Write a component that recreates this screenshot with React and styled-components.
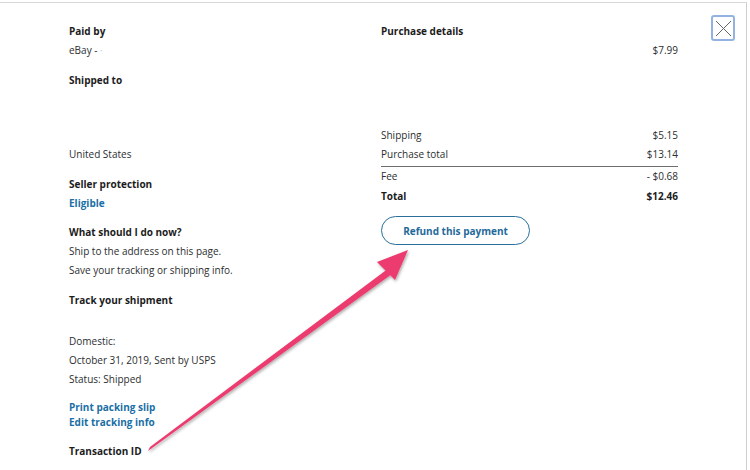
import React from "react"
import styled, { createGlobalStyle } from "styled-components"

const GlobalStyle = createGlobalStyle`
  html, body {
    margin: 0;
    padding: 0;
    background: #fff;
  }
  body {
    font-family: "Open Sans", "Noto Sans", sans-serif;
    color: #2c2e2f;
    -webkit-font-smoothing: antialiased;
  }
`

const Page = styled.div`
  position: relative;
  width: 750px;
  height: 470px;
  overflow: hidden;
  background: #fff;
`

const Modal = styled.div`
  margin-top: 2px;
  width: 747px;
  height: 468px;
  box-sizing: border-box;
  border-top: 1px solid #d6d6d6;
  border-right: 1px solid #cfcfcf;
  padding: 19px 0 0 69px;
  display: grid;
  grid-template-columns: 312px 297px;
`

const Column = styled.div`
  display: flex;
  flex-direction: column;
`

const Section = styled.div`
  display: flex;
  flex-direction: column;
  margin-bottom: ${p => p.$gap || 11}px;
`

const Label = styled.div`
  font-size: 10px;
  line-height: 19px;
  font-weight: 700;
  color: #1c1c1c;
`

const Line = styled.div`
  font-size: 10px;
  line-height: 19px;
  color: #2c2e2f;
`

const Spacer = styled.div`
  height: ${p => p.$h}px;
`

const Link = styled.a`
  font-size: 10px;
  line-height: ${p => p.$lh || 19}px;
  font-weight: 700;
  color: #1a6fa5;
  text-decoration: none;
`

const Row = styled.div`
  display: flex;
  justify-content: space-between;
  font-size: 10px;
  line-height: ${p => p.$lh || 19}px;
  font-weight: ${p => (p.$bold ? 700 : 400)};
  color: ${p => (p.$bold ? "#1c1c1c" : "#2c2e2f")};
  ${p => p.$rule && "border-bottom: 1px solid #6e6e6e; padding-bottom: 2px;"}
`

const Amount = styled.div`
  text-align: right;
  font-size: 10px;
  line-height: 19px;
  color: #2c2e2f;
`

const RefundButton = styled.button`
  margin-top: 10px;
  width: 149px;
  height: 29px;
  border: 1px solid #2a6f9b;
  border-radius: 15px;
  background: #fff;
  color: #1f6a9a;
  font-family: inherit;
  font-size: 10px;
  font-weight: 700;
  cursor: pointer;
  padding: 0;
`

const CloseButton = styled.button`
  position: absolute;
  top: 15px;
  left: 711px;
  width: 24px;
  height: 26px;
  padding: 0;
  border: 2px solid #93b2e2;
  border-radius: 3px;
  background: #fff;
  display: flex;
  align-items: center;
  justify-content: center;
`

const Arrow = styled.svg`
  position: absolute;
  left: 0;
  top: 0;
  pointer-events: none;
`

export default function App() {
  return (
    <>
      <GlobalStyle />
      <Page>
        <Modal>
          <Column>
            <Section>
              <Label>Paid by</Label>
              <Line>eBay - <span style={{ color: "#ccc" }}>·</span></Line>
            </Section>
            <Section>
              <Label>Shipped to</Label>
              <Spacer $h={55} />
              <Line>United States</Line>
            </Section>
            <Section>
              <Label>Seller protection</Label>
              <Link $lh={18}>Eligible</Link>
            </Section>
            <Section>
              <Label>What should I do now?</Label>
              <Line>Ship to the address on this page.</Line>
              <Line>Save your tracking or shipping info.</Line>
            </Section>
            <Section $gap={22}>
              <Label>Track your shipment</Label>
            </Section>
            <Section>
              <Line>Domestic:</Line>
              <Line>October 31, 2019, Sent by USPS</Line>
              <Line>Status: Shipped</Line>
            </Section>
            <Section $gap={12}>
              <Link $lh={15}>Print packing slip</Link>
              <Link $lh={15}>Edit tracking info</Link>
            </Section>
            <Label>Transaction ID</Label>
          </Column>
          <Column>
            <Label>Purchase details</Label>
            <Amount>$7.99</Amount>
            <Spacer $h={66} />
            <Row>
              <span>Shipping</span>
              <span>$5.15</span>
            </Row>
            <Row $rule>
              <span>Purchase total</span>
              <span>$13.14</span>
            </Row>
            <Row>
              <span>Fee</span>
              <span>- $0.68</span>
            </Row>
            <Row $bold $lh={20}>
              <span>Total</span>
              <span>$12.46</span>
            </Row>
            <div>
              <RefundButton>Refund this payment</RefundButton>
            </div>
          </Column>
        </Modal>
        <CloseButton aria-label="Close">
          <svg width="17" height="17" viewBox="0 0 17 17">
            <path d="M1 1 L16 16 M16 1 L1 16" stroke="#666" strokeWidth="1" fill="none" />
          </svg>
        </CloseButton>
        <Arrow width="750" height="470" viewBox="0 0 750 470">
          <defs>
            <filter id="sh" x="-10%" y="-10%" width="120%" height="120%">
              <feDropShadow dx="1" dy="1.5" stdDeviation="1.5" floodColor="#000" floodOpacity="0.35" />
            </filter>
          </defs>
          <g filter="url(#sh)" fill="#ec3a6e">
            <path d="M148 451 L150 447 L393 265 L396 271 Z" />
            <path d="M408 250 L377 262 L395 280 Z" />
          </g>
        </Arrow>
      </Page>
    </>
  )
}
